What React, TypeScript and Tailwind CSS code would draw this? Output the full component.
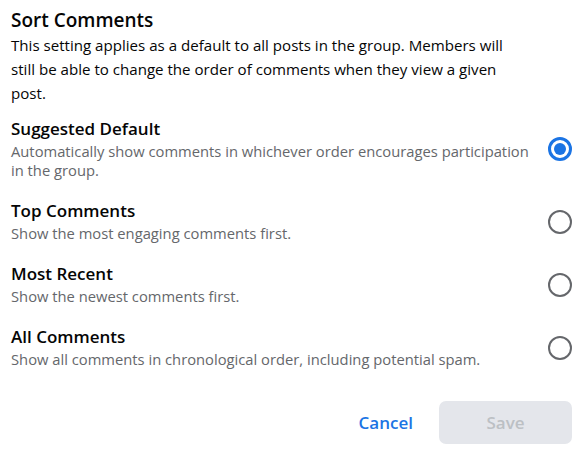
const options = [
  {
    title: 'Suggested Default',
    desc: 'Automatically show comments in whichever order encourages participation in the group.',
    checked: true,
  },
  { title: 'Top Comments', desc: 'Show the most engaging comments first.', checked: false },
  { title: 'Most Recent', desc: 'Show the newest comments first.', checked: false },
  {
    title: 'All Comments',
    desc: 'Show all comments in chronological order, including potential spam.',
    checked: false,
  },
];

function Radio({ checked }: { checked: boolean }) {
  return checked ? (
    <div className="w-[24px] h-[24px] rounded-full border-[3px] border-[#1b74e4] flex items-center justify-center shrink-0">
      <div className="w-[12px] h-[12px] rounded-full bg-[#1b74e4]" />
    </div>
  ) : (
    <div className="w-[24px] h-[24px] rounded-full border-2 border-[#65676b] shrink-0" />
  );
}

export default function App() {
  return (
    <div
      className="w-[586px] h-[453px] bg-white text-[#050505] pl-[11px] pr-[14px] pt-[8px]"
      style={{ fontFamily: '"Open Sans", "Noto Sans", sans-serif' }}
    >
      <h2 className="text-[19px] font-semibold leading-[25px]">Sort Comments</h2>
      <p className="text-[15.1px] leading-[24px] max-w-[512px]">
        This setting applies as a default to all posts in the group. Members will still be able to change the order of comments when they view a given post.
      </p>

      <div className="flex flex-col gap-[20px] mt-[13px]">
        {options.map((o) => (
          <div key={o.title} className="flex items-center justify-between">
            <div className="max-w-[525px]">
              <div className="text-[17px] font-semibold leading-[22px]">{o.title}</div>
              <div className="text-[14.75px] leading-[19px] text-[#65676b] mt-[2px]">{o.desc}</div>
            </div>
            <Radio checked={o.checked} />
          </div>
        ))}
      </div>

      <div className="flex items-center justify-end gap-[24px] mt-[32px]">
        <button className="text-[17px] font-semibold text-[#1b74e4] px-[2px]">Cancel</button>
        <button className="w-[133px] h-[43px] rounded-[7px] bg-[#e4e6eb] text-[17px] font-semibold text-[#bcc0c4]">
          Save
        </button>
      </div>
    </div>
  );
}
